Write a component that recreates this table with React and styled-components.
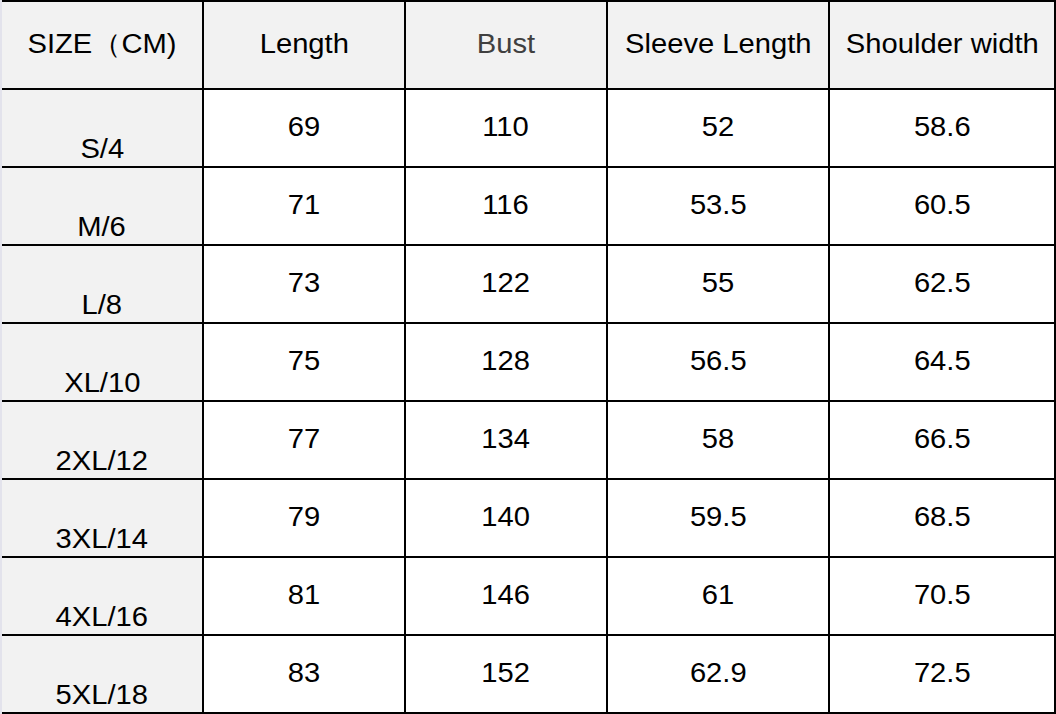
import React from 'react';
import styled, { createGlobalStyle } from 'styled-components';

const GlobalStyle = createGlobalStyle`
    html, body {
        margin: 0;
        padding: 0;
        background: #ffffff;
    }
    body {
        font-family: "Liberation Sans", Arial, sans-serif;
    }
`;

/*CSS*/

const SizeTable = styled.div`
    display: grid;
    grid-template-columns: 200px 200px 200px 220px 224px;
    grid-template-rows: 86px repeat(8, 76px);
    gap: 2px;
    width: 1056px;
    box-sizing: border-box;
    padding: 2px 2px 2px 0;
    border-left: 2px solid #e3e3ec;
    background: #000000;
`;

const Cell = styled.div`
    display: flex;
    justify-content: center;
    align-items: ${props => (props.bottom ? 'flex-end' : 'center')};
    padding-bottom: ${props => (props.bottom ? '1px' : '0')};
    box-sizing: border-box;
    background: ${props => (props.shaded ? '#f2f2f2' : '#ffffff')};
    color: ${props => props.color || '#000000'};
    font-size: 27px;
    line-height: 1.15;
    white-space: nowrap;
`;

/* the sheet text is a little wider than plain Arial */
const Label = styled.span`
    display: inline-block;
    transform: scaleX(1.08);
`;

const headers = [
    { label: 'SIZE（CM)' },
    { label: 'Length' },
    { label: 'Bust', color: '#404040' },
    { label: 'Sleeve Length' },
    { label: 'Shoulder width' },
];

const rows = [
    ['S/4', '69', '110', '52', '58.6'],
    ['M/6', '71', '116', '53.5', '60.5'],
    ['L/8', '73', '122', '55', '62.5'],
    ['XL/10', '75', '128', '56.5', '64.5'],
    ['2XL/12', '77', '134', '58', '66.5'],
    ['3XL/14', '79', '140', '59.5', '68.5'],
    ['4XL/16', '81', '146', '61', '70.5'],
    ['5XL/18', '83', '152', '62.9', '72.5'],
];

export default function App() {
    return (
        <>
            <GlobalStyle />
            <SizeTable>
                {headers.map(h => (
                    <Cell key={h.label} shaded color={h.color}>
                        <Label>{h.label}</Label>
                    </Cell>
                ))}
                {rows.map(row =>
                    row.map((value, i) => (
                        <Cell key={row[0] + i} shaded={i === 0} bottom={i === 0}>
                            <Label>{value}</Label>
                        </Cell>
                    ))
                )}
            </SizeTable>
        </>
    );
}
